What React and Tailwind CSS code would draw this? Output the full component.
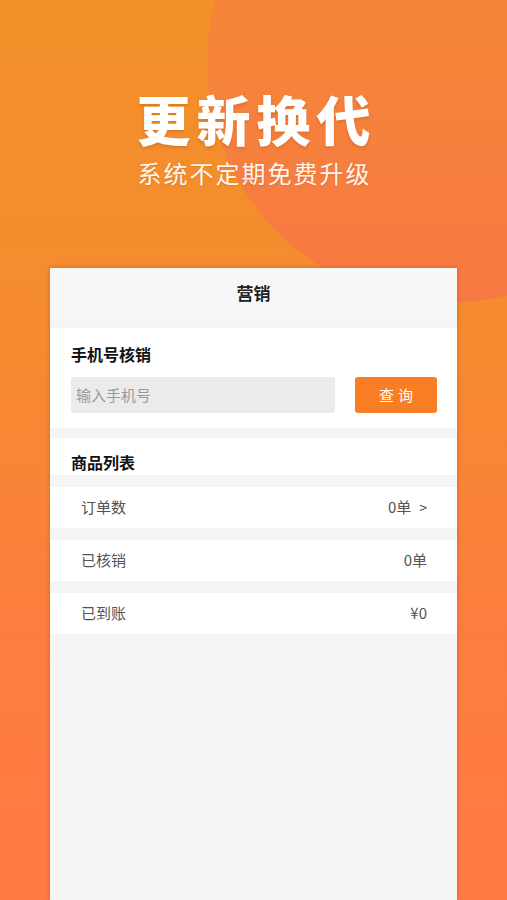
import React from 'react';

const cjk = { fontFamily: '"Noto Sans CJK SC", "Noto Sans", sans-serif' };

const rows = [
  { label: '订单数', value: '0单', arrow: true },
  { label: '已核销', value: '0单' },
  { label: '已到账', value: '¥0' },
];

const App = () => {
  return (
    <div
      className="relative w-[507px] h-[900px] overflow-hidden bg-[linear-gradient(180deg,#f39029_0%,#f58b2e_35%,#fd7d3f_70%,#ff7a45_100%)]"
      style={cjk}
    >
      {/* decorative circle */}
      <div className="absolute left-[207px] top-[-179px] w-[482px] h-[482px] rounded-full bg-[linear-gradient(180deg,#f48b2c_0%,#f5843a_50%,#f87843_100%)]"></div>

      <div className="relative flex flex-col items-center">
        {/* Hero */}
        <h1 className="mt-[84px] text-white text-[54px] leading-[70px] font-black tracking-[6px] pl-[6px] [text-shadow:0_2px_3px_rgba(150,60,0,0.25)]">
          更新换代
        </h1>
        <p className="mt-[4px] text-white/95 text-[24px] leading-[30px] tracking-[2px] pl-[2px] [text-shadow:0_1px_2px_rgba(150,60,0,0.2)]">
          系统不定期免费升级
        </p>

        {/* Phone card */}
        <div className="mt-[80px] w-[407px] h-[632px] bg-[#f5f5f5] flex flex-col shadow-[0_0_4px_rgba(120,50,0,0.35)]">
          <div className="h-[50px] bg-[#f7f7f7] flex items-center justify-center text-[17px] font-bold text-[#222]">
            营销
          </div>

          <div className="mt-[10px] bg-white px-[21px] pt-[14px] pb-[15px]">
            <div className="text-[16px] leading-[24px] font-bold text-[#111]">手机号核销</div>
            <div className="mt-[11px] flex items-center justify-between">
              <div className="w-[264px] h-[36px] rounded-[3px] bg-[#ebebeb] flex items-center px-[5px] text-[15px] text-[#9a9a9a]">
                输入手机号
              </div>
              <button className="mr-[-1px] w-[82px] h-[36px] rounded-[3px] bg-[#f97d22] text-white text-[15px] tracking-[4px] pl-[4px]">
                查询
              </button>
            </div>
          </div>

          <div className="mt-[10px] bg-white h-[37px] px-[21px] pb-[1px] flex items-end text-[16px] leading-[24px] font-bold text-[#111]">
            商品列表
          </div>

          <div className="flex flex-col gap-[12px] mt-[12px]">
            {rows.map((r) => (
              <div
                key={r.label}
                className="h-[41px] bg-white flex items-center justify-between pl-[31px] pr-[30px] text-[15px] text-[#555]"
              >
                <span>{r.label}</span>
                <span className="flex items-center gap-[8px]">
                  {r.value}
                  {r.arrow && <span className="text-[14px] text-[#444]">&gt;</span>}
                </span>
              </div>
            ))}
          </div>
        </div>
      </div>
    </div>
  );
};

export default App;
